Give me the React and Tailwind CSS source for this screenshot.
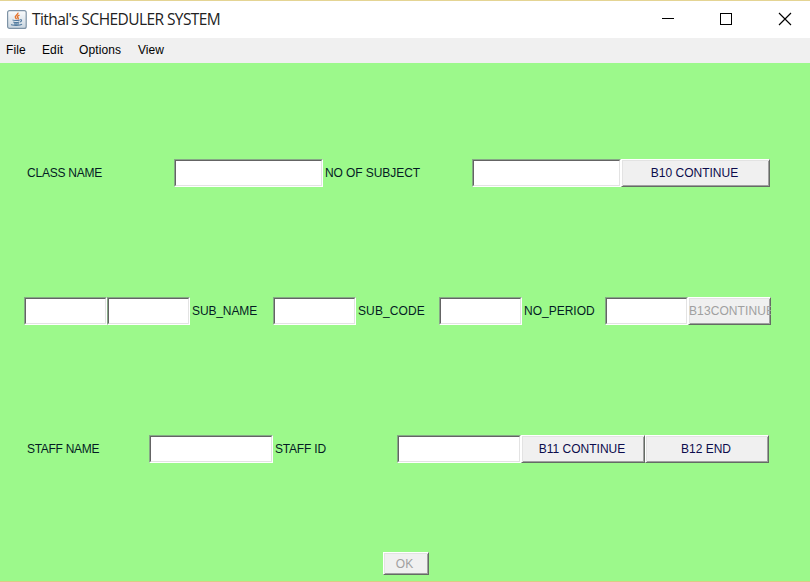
import React from "react";

function Field({ width }) {
  return (
    <div className={`${width} h-7 shrink-0 border border-t-[#86a886] border-l-[#86a886] border-r-white border-b-white`}>
      <input
        type="text"
        className="block h-full w-full rounded-none border border-t-[#646464] border-l-[#646464] border-r-[#e3e3e3] border-b-[#e3e3e3] bg-white outline-none"
      />
    </div>
  );
}

function Label({ width, tracking = "", children }) {
  return (
    <div className={`${width} ${tracking} shrink-0 pl-[2px] text-[12px] leading-7 whitespace-nowrap text-[#041c24]`}>
      {children}
    </div>
  );
}

function Button({ width, height = "h-7", disabled = false, align = "justify-center pr-[2px]", tracking = "", children }) {
  return (
    <button
      disabled={disabled}
      className={`${width} ${height} ${align} ${tracking} ${
        disabled ? "text-[#a0a0a0]" : "text-[#0c0c4c]"
      } flex shrink-0 items-center border border-t-white border-l-white border-r-[#646c64] border-b-[#646c64] bg-[#f0f0f0] text-[12px] leading-none whitespace-nowrap shadow-[inset_1px_1px_0_#e3e3e3,inset_-1px_-1px_0_#a0a0a0] [clip-path:inset(0)]`}
    >
      {children}
    </button>
  );
}

function JavaIcon() {
  return (
    <svg width="20" height="19" viewBox="0 0 20 19" fill="none">
      <defs>
        <linearGradient id="tile" x1="0" y1="0" x2="0" y2="1">
          <stop offset="0" stopColor="#fbfcfd" />
          <stop offset="1" stopColor="#c9d5df" />
        </linearGradient>
      </defs>
      <rect x="0.6" y="0.6" width="18.6" height="17.8" rx="2" fill="url(#tile)" stroke="#7e93a6" strokeWidth="1.2" />
      <path d="M10.8 2.7c1.2 2-3.5 2.7-2.4 4.8.3.6 1 1 1 1.7M12.5 5.2c-2.5 1-2.5 1.8-1.5 2.7.6.5.2 1.1-.4 1.5" stroke="#e5732c" strokeWidth="1.4" />
      <path d="M5.5 9.9c1.5.9 5.5.8 7.2 0M6.3 11.9c1.6.8 4.4.8 6 0M13 9.8c2.2-.5 2 1.6 0 2.2M4.5 14.2c-.8 1.5 8.7 1.8 10.5 0M7 13.7c1.2.5 3.5.5 5 0" stroke="#527b9f" strokeWidth="1.1" />
    </svg>
  );
}

export default function App() {
  return (
    <div className="flex h-[582px] w-[810px] flex-col overflow-hidden border-t border-b border-t-[#e4d493] border-b-[#dccb84] bg-[#9cf98b] font-['Liberation_Sans',Arial,sans-serif]">
      <header className="flex h-[37px] shrink-0 items-center bg-white pl-[7px]">
        <JavaIcon />
        <span className="ml-[5px] pb-[2px] text-[15.5px] leading-5 tracking-[-0.58px] whitespace-nowrap text-[#222] font-['Open_Sans','Noto_Sans',sans-serif]">
          Tithal's SCHEDULER SYSTEM
        </span>
        <svg className="ml-auto shrink-0" width="150" height="37" viewBox="0 0 150 37" fill="none" stroke="#000" shapeRendering="crispEdges">
          <path d="M2 17.5h12" />
          <rect x="60.5" y="12.5" width="11" height="11" />
          <path d="M119 12l12 12M131 12l-12 12" shapeRendering="auto" strokeWidth="1.15" />
        </svg>
      </header>

      <nav className="flex h-[25px] shrink-0 items-center bg-[#f0f0f0] pb-[2px] pl-[6px] text-[12px] leading-none text-black">
        <span className="w-9 tracking-[0.1px]">File</span>
        <span className="w-[37px] tracking-[0.1px]">Edit</span>
        <span className="w-[59px] tracking-[0.12px]">Options</span>
        <span>View</span>
      </nav>

      <main className="flex flex-1 flex-col items-start pt-24">
        <section className="ml-[25px] flex">
          <Label width="w-[149px]" tracking="tracking-[-0.22px]">CLASS NAME</Label>
          <Field width="w-[149px]" />
          <Label width="w-[149px]" tracking="tracking-[-0.08px]">NO OF SUBJECT</Label>
          <Field width="w-[149px]" />
          <Button width="w-[149px]">B10 CONTINUE</Button>
        </section>

        <section className="mt-[110px] ml-6 flex">
          <Field width="w-[83px]" />
          <Field width="w-[83px]" />
          <Label width="w-[83px]" tracking="tracking-[-0.12px]">SUB_NAME</Label>
          <Field width="w-[83px]" />
          <Label width="w-[83px]" tracking="tracking-[0.12px]">SUB_CODE</Label>
          <Field width="w-[83px]" />
          <Label width="w-[83px]">NO_PERIOD</Label>
          <Field width="w-[83px]" />
          <Button width="w-[83px]" align="justify-start" tracking="tracking-[0.1px]" disabled>B13CONTINUE</Button>
        </section>

        <section className="mt-[110px] ml-[25px] flex">
          <Label width="w-[124px]" tracking="tracking-[-0.3px]">STAFF NAME</Label>
          <Field width="w-[124px]" />
          <Label width="w-[124px]" tracking="tracking-[-0.2px]">STAFF ID</Label>
          <Field width="w-[124px]" />
          <Button width="w-[124px]">B11 CONTINUE</Button>
          <Button width="w-[124px]">B12 END</Button>
        </section>

        <div className="mt-[89px] ml-[383px]">
          <Button width="w-[46px]" height="h-[23px]" align="justify-center pr-[3px]" disabled>OK</Button>
        </div>
      </main>
    </div>
  );
}
